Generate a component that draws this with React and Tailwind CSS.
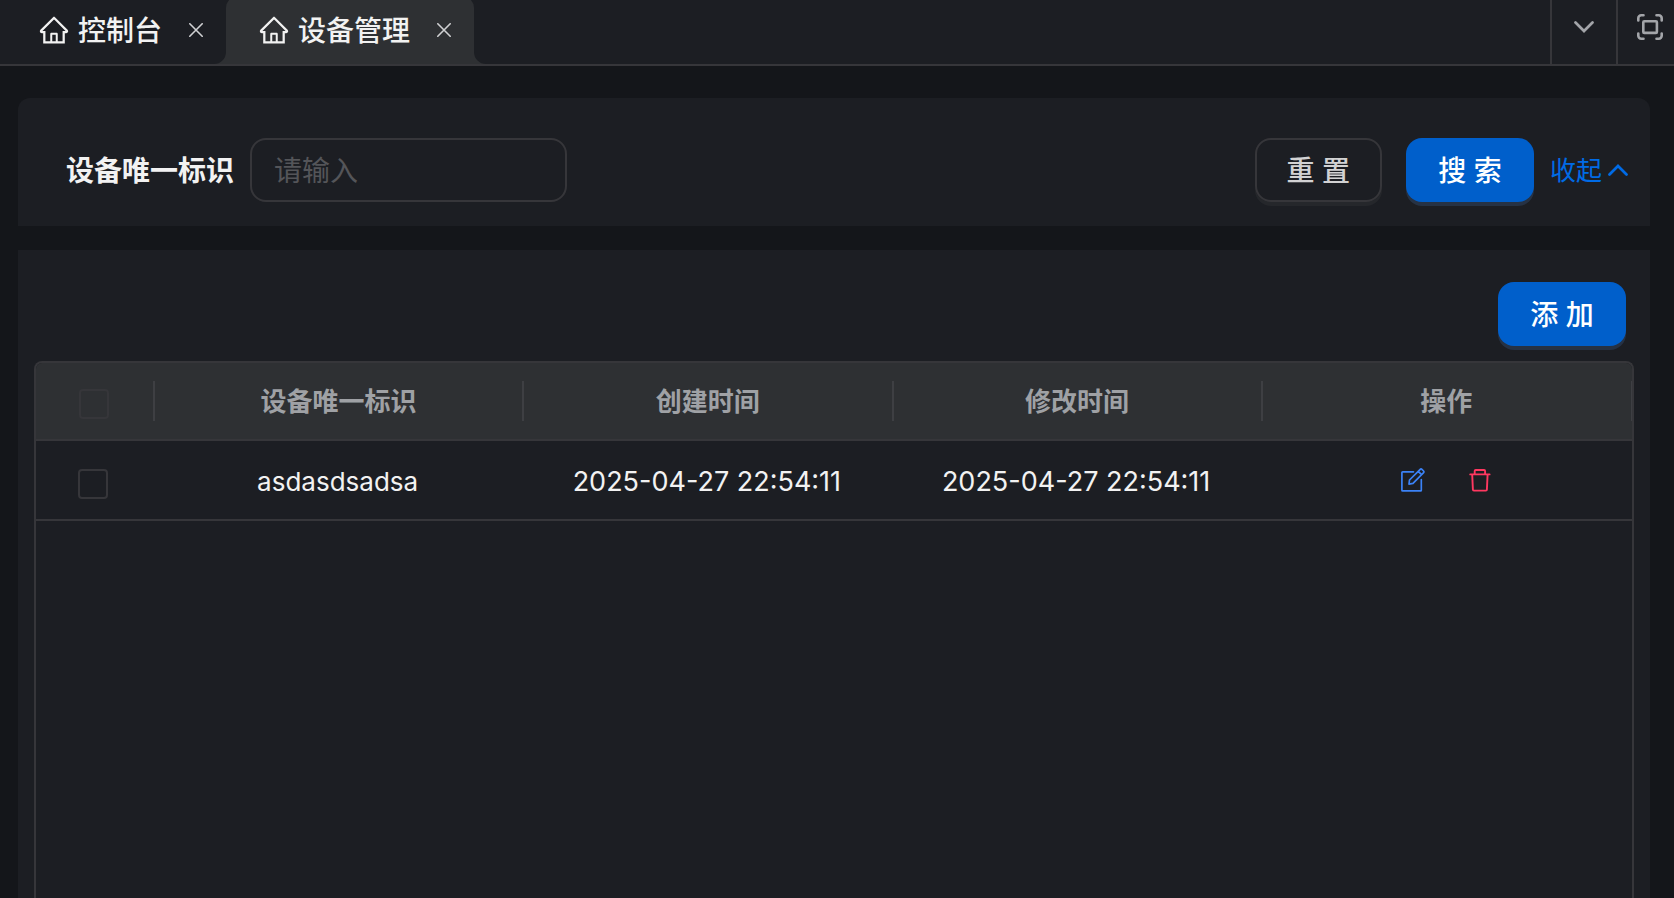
import { AiOutlineHome } from 'react-icons/ai';

const TABS = [
  { title: '控制台', active: false },
  { title: '设备管理', active: true },
];

const ROWS = [
  { id: 'asdasdsadsa', created: '2025-04-27 22:54:11', updated: '2025-04-27 22:54:11' },
];

const COLUMNS = ['设备唯一标识', '创建时间', '修改时间', '操作'];

function Chevron({ className }) {
  return (
    <svg viewBox="0 0 20 12" fill="none" stroke="currentColor" strokeLinecap="round" className={className} aria-hidden="true">
      <path d="M1.5 1.500 10 10l8.500-8.500" strokeWidth="2.700" />
    </svg>
  );
}

function CloseIcon() {
  return (
    <svg viewBox="0 0 14 14" fill="none" stroke="currentColor" strokeWidth="1.600" strokeLinecap="round" className="h-3.5 w-3.5" aria-hidden="true">
      <path d="M.8.8l12.400 12.400M13.200.8L.8 13.200" />
    </svg>
  );
}

function FullscreenIcon() {
  return (
    <svg viewBox="0 0 26 26" fill="none" stroke="currentColor" strokeWidth="2.600" strokeLinecap="round" className="h-[26px] w-[26px]" aria-hidden="true">
      <path d="M1.300 6.500V4.200a2.900 2.900 0 0 1 2.900-2.900h2.300M19.500 1.300h2.300a2.900 2.900 0 0 1 2.900 2.900v2.300M24.700 19.500v2.300a2.900 2.900 0 0 1-2.900 2.900h-2.300M6.500 24.700H4.200a2.900 2.900 0 0 1-2.900-2.900v-2.300" />
      <rect x="6.300" y="7.300" width="13.600" height="11.600" rx="1" />
    </svg>
  );
}

function EditIcon() {
  return (
    <svg viewBox="0 0 24 24" fill="none" stroke="currentColor" strokeWidth="1.700" strokeLinecap="round" strokeLinejoin="round" className="h-6 w-6" aria-hidden="true">
      <path d="M12.500 3.800H1.600a.7.7 0 0 0-.7.7v17.700a.7.7 0 0 0 .7.7h18a.7.7 0 0 0 .7-.7V11.500" />
      <path d="M8 16.200l.5-4.200L19.200 1.300a1.200 1.200 0 0 1 1.700 0l1.700 1.700a1.200 1.200 0 0 1 0 1.700L12 15.400zM17.200 3.300l3.400 3.400" />
    </svg>
  );
}

function TrashIcon() {
  return (
    <svg viewBox="0 0 24 24" fill="none" stroke="currentColor" strokeWidth="1.900" strokeLinecap="round" strokeLinejoin="round" className="h-6 w-6" aria-hidden="true">
      <path d="M1.200 6.400h19.400M5.700 6.200V3a1 1 0 0 1 1-1h8.400a1 1 0 0 1 1 1v3.200M3.200 6.400l.7 15.200a1 1 0 0 0 1 1h12a1 1 0 0 0 1-1l.7-15.200" />
    </svg>
  );
}

function Tab({ title, active }) {
  return (
    <div className={active ? 'relative flex items-center rounded-t-xl bg-[#2e3033] pr-[23px] pl-[34px]' : 'relative flex items-center pr-[23px] pl-[34px]'}>
      {active && (
        <>
          <svg viewBox="0 0 12 12" className="absolute right-full bottom-0 h-3 w-3 text-[#2e3033]" aria-hidden="true">
            <path d="M12 0v12H0A12 12 0 0 0 12 0z" fill="currentColor" />
          </svg>
          <svg viewBox="0 0 12 12" className="absolute bottom-0 left-full h-3 w-3 text-[#2e3033]" aria-hidden="true">
            <path d="M0 0v12h12A12 12 0 0 1 0 0z" fill="currentColor" />
          </svg>
        </>
      )}
      <a href="#" className="flex items-center gap-2 text-[28px] leading-10 font-medium">
        <AiOutlineHome className="-ml-0.5 h-8 w-8" aria-hidden="true" />
        <span className="pt-0.5">{title}</span>
      </a>
      <button type="button" aria-label="关闭" className="ml-[27px] text-[#d0d1d3]">
        <CloseIcon />
      </button>
    </div>
  );
}

function PrimaryButton({ children }) {
  return (
    <button type="button" className="h-16 min-w-32 rounded-2xl bg-[#005fcb] px-6 pt-0.5 text-[28px] leading-10 font-medium whitespace-nowrap text-white shadow-[0_4px_0_#263244]">
      {children}
    </button>
  );
}

export default function App() {
  return (
    <div className="flex h-screen flex-col overflow-hidden bg-[#14161a] font-['Inter','Noto_Sans_CJK_SC',sans-serif] text-[#f2f2f2]">
      <header className="flex h-[66px] shrink-0 border-b-2 border-[#36363a] bg-[#1c1e23]">
        <nav className="-mt-1 flex flex-1 pl-1.5">
          {TABS.map((tab) => (
            <Tab key={tab.title} {...tab} />
          ))}
        </nav>
        <button type="button" aria-label="更多" className="flex w-[66px] justify-center border-l-2 border-[#36363a] pt-[21px] text-[#a3a5a9]">
          <Chevron className="h-3 w-5" />
        </button>
        <button type="button" aria-label="全屏" className="flex w-[58px] border-l-2 border-[#36363a] pt-3.5 pl-[19px] text-[#a3a5a9]">
          <FullscreenIcon />
        </button>
      </header>

      <main className="flex flex-1 flex-col gap-6 pt-8 pr-6 pl-[18px]">
        <form className="flex items-center rounded-t-xl bg-[#1c1e23] pt-10 pr-[22px] pb-6 pl-12">
          <label htmlFor="device-id" className="mr-4 pt-0.5 text-[28px] leading-10 font-bold">
            设备唯一标识
          </label>
          <input
            id="device-id"
            type="text"
            placeholder="请输入"
            className="h-16 w-[317px] rounded-2xl border-2 border-[#36363a] bg-transparent px-[22px] pt-0.5 text-[28px] outline-none placeholder:text-[#545559]"
          />
          <div className="ml-auto flex items-center gap-6">
            <button type="reset" className="h-16 rounded-2xl border-2 border-[#36363a] px-[30px] pt-0.5 text-[28px] leading-10 font-medium whitespace-nowrap text-[#d2d2d3] shadow-[0_4px_0_#25272b]">
              重 置
            </button>
            <PrimaryButton>搜 索</PrimaryButton>
          </div>
          <button type="button" className="ml-4 flex items-center gap-1.5 text-[26px] leading-10 text-[#006be6]">
            <span className="pt-0.5">收起</span>
            <Chevron className="h-3 w-5 rotate-180" />
          </button>
        </form>

        <section className="flex flex-1 flex-col bg-[#1c1e23] px-4 pt-8">
          <div className="mb-[15px] flex justify-end pr-2">
            <PrimaryButton>添 加</PrimaryButton>
          </div>
          <div className="flex-1 overflow-hidden rounded-t-lg border-2 border-b-0 border-[#36363a]">
            <table className="w-full table-fixed border-separate border-spacing-0 text-center text-[26px] leading-9">
              <thead>
                <tr className="h-[78px] bg-[#2e3033] text-[#9fa1a5]">
                  <th className="relative w-[119px] border-b-2 border-[#36363a] p-0 pr-1">
                    <input type="checkbox" disabled aria-label="全选" className="mx-auto mt-1.5 block h-[30px] w-[30px] appearance-none rounded border-2 border-[#36363a]" />
                    <span className="absolute top-[18px] right-0 h-10 w-0.5 bg-[#3e3f43]" />
                  </th>
                  {COLUMNS.map((name) => (
                    <th key={name} className="group relative border-b-2 border-[#36363a] p-0 pt-0.5 pr-0.5 font-bold">
                      {name}
                      <span className="absolute top-[18px] right-0 h-10 w-0.5 bg-[#3e3f43] group-last:w-px" />
                    </th>
                  ))}
                </tr>
              </thead>
              <tbody>
                {ROWS.map((row) => (
                  <tr key={row.id} className="h-20">
                    <td className="border-b-2 border-[#36363a] p-0 pr-1.5">
                      <input type="checkbox" aria-label={row.id} className="mx-auto mt-2 block h-[30px] w-[30px] appearance-none rounded border-2 border-[#36363a]" />
                    </td>
                    <td className="border-b-2 border-[#36363a] p-0 pt-1 pr-1">{row.id}</td>
                    <td className="border-b-2 border-[#36363a] p-0 pt-1 pr-1 text-[27px]">{row.created}</td>
                    <td className="border-b-2 border-[#36363a] p-0 pt-1 pr-1 text-[27px]">{row.updated}</td>
                    <td className="border-b-2 border-[#36363a] p-0">
                      <div className="flex justify-center gap-11">
                        <button type="button" aria-label="编辑" className="text-[#3b82f6]">
                          <EditIcon />
                        </button>
                        <button type="button" aria-label="删除" className="text-[#ff3860]">
                          <TrashIcon />
                        </button>
                      </div>
                    </td>
                  </tr>
                ))}
              </tbody>
            </table>
          </div>
        </section>
      </main>
    </div>
  );
}
